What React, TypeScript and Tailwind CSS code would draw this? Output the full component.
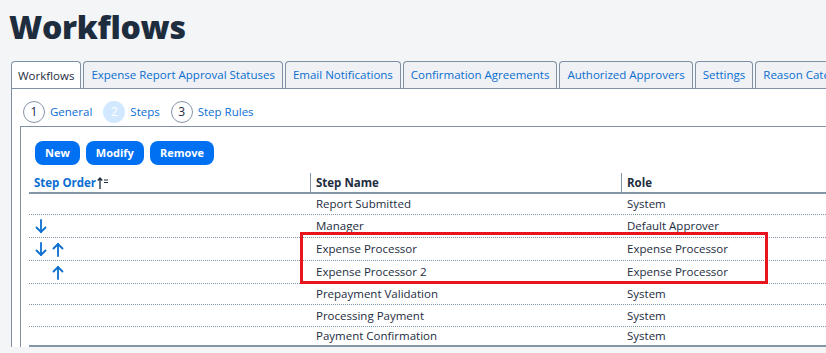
import React from 'react';

const tabs = [
  'Workflows',
  'Expense Report Approval Statuses',
  'Email Notifications',
  'Confirmation Agreements',
  'Authorized Approvers',
  'Settings',
  'Reason Categories',
];

const rows = [
  { name: 'Report Submitted', role: 'System', down: false, up: false, h: 'h-[21px]' },
  { name: 'Manager', role: 'Default Approver', down: true, up: false, h: 'h-[23px]' },
  { name: 'Expense Processor', role: 'Expense Processor', down: true, up: true, h: 'h-[23px]' },
  { name: 'Expense Processor 2', role: 'Expense Processor', down: false, up: true, h: 'h-[23px]' },
  { name: 'Prepayment Validation', role: 'System', down: false, up: false, h: 'h-[21px]' },
  { name: 'Processing Payment', role: 'System', down: false, up: false, h: 'h-[22px]' },
  { name: 'Payment Confirmation', role: 'System', down: false, up: false, h: 'h-[20px]' },
];

function Arrow({ dir }: { dir: 'up' | 'down' }) {
  return (
    <svg width="12" height="15" viewBox="0 0 12 15" fill="none" stroke="#0a6ed1" strokeWidth="1.8" strokeLinecap="round">
      {dir === 'down' ? (
        <>
          <path d="M6 1v12" />
          <path d="M1.5 8.5L6 13l4.5-4.5" />
        </>
      ) : (
        <>
          <path d="M6 14V2" />
          <path d="M1.5 6.5L6 2l4.5 4.5" />
        </>
      )}
    </svg>
  );
}

function Step({ n, label, active }: { n: number; label: string; active?: boolean }) {
  return (
    <div className="flex items-center gap-[5px]">
      <span
        className={
          active
            ? 'flex h-[22px] w-[22px] items-center justify-center rounded-full bg-[#d1e8ff] text-[12px] text-white'
            : 'flex h-[22px] w-[22px] items-center justify-center rounded-full border border-[#8696a9] bg-white text-[12px] text-[#1d2d3e]'
        }
      >
        {n}
      </span>
      <span className="text-[11.5px] text-[#0a6ed1]">{label}</span>
    </div>
  );
}

export default function App() {
  return (
    <div className="h-[353px] w-[826px] overflow-hidden bg-[#f4f5f7]" style={{ fontFamily: '"Open Sans", "Noto Sans", sans-serif' }}>
      <h1 className="pl-[9px] pt-[6px] text-[32px] font-extrabold leading-[42px] tracking-[-0.3px] text-[#1d2d3e]">
        Workflows
      </h1>

      <div className="mt-[13px] flex gap-[2px] overflow-hidden pl-[11px]">
        {tabs.map((t, i) => (
          <div
            key={t}
            className={
              i === 0
                ? 'relative z-10 -mb-px flex h-[28px] shrink-0 items-center rounded-t-[4px] border border-b-0 border-[#7f8fa4] bg-white px-[6px] text-[11.5px] text-[#1d2d3e]'
                : 'flex h-[27px] shrink-0 items-center rounded-t-[4px] border border-b-0 border-[#7f8fa4] bg-[#eff1f4] px-[7px] text-[11.5px] text-[#0a6ed1]'
            }
          >
            {t}
          </div>
        ))}
      </div>

      <div className="ml-[11px] border-l border-t border-[#7f8fa4] bg-white pl-[8px]">
        <div className="flex h-[37px] items-center gap-[11px] pl-[3px] pt-[8px]">
          <Step n={1} label="General" />
          <Step n={2} label="Steps" active />
          <Step n={3} label="Step Rules" />
        </div>

        <div className="border-l border-t border-[#7f8fa4] pl-[8px] pt-[14px]">
          <div className="flex gap-[6px] pl-[6px]">
            {['New', 'Modify', 'Remove'].map((b) => (
              <button
                key={b}
                className="h-[24px] rounded-[8px] bg-[#0070f2] px-[10px] text-[11px] font-bold text-white"
              >
                {b}
              </button>
            ))}
          </div>

          <div className="mt-[8px]">
            <div className="flex h-[21px] items-center border-b-2 border-[#8396a8] text-[11.5px] font-bold">
              <div className="flex w-[281px] items-center pl-[5px] text-[#0a6ed1]">
                Step Order
                <svg width="12" height="14" viewBox="0 0 12 14" className="ml-[1px]">
                  <path d="M3 13V2M0.8 4.5L3 2l2.2 2.5" stroke="#1d2d3e" strokeWidth="1.3" fill="none" />
                  <path d="M7 4h4M7 6.5h4" stroke="#1d2d3e" strokeWidth="1" />
                </svg>
              </div>
              <div className="h-full w-[311px] border-l border-[#8396a8] pl-[5px] leading-[20px] text-[#1d2d3e]">Step Name</div>
              <div className="h-full flex-1 border-l border-[#8396a8] pl-[5px] leading-[20px] text-[#1d2d3e]">Role</div>
            </div>

            {rows.map((r, i) => (
              <div
                key={r.name}
                className={
                  i === rows.length - 1
                    ? `flex ${r.h} items-center border-b-2 border-[#8396a8] text-[11.5px] text-[#1d2d3e]`
                    : `flex ${r.h} items-center border-b border-dotted border-[#8396a8] text-[11.5px] text-[#1d2d3e]`
                }
              >
                <div className="flex w-[281px] items-center gap-[5px] pl-[6px]">
                  <span className="w-[12px]">{r.down && <Arrow dir="down" />}</span>
                  <span className="w-[12px]">{r.up && <Arrow dir="up" />}</span>
                </div>
                <div className="w-[311px] pl-[6px]">{r.name}</div>
                <div className="flex-1 pl-[6px]">{r.role}</div>
              </div>
            ))}
          </div>
        </div>
      </div>

      <div className="pointer-events-none absolute left-[300px] top-[232px] h-[52px] w-[468px] border-[3px] border-[#e8141e]" />
    </div>
  );
}
